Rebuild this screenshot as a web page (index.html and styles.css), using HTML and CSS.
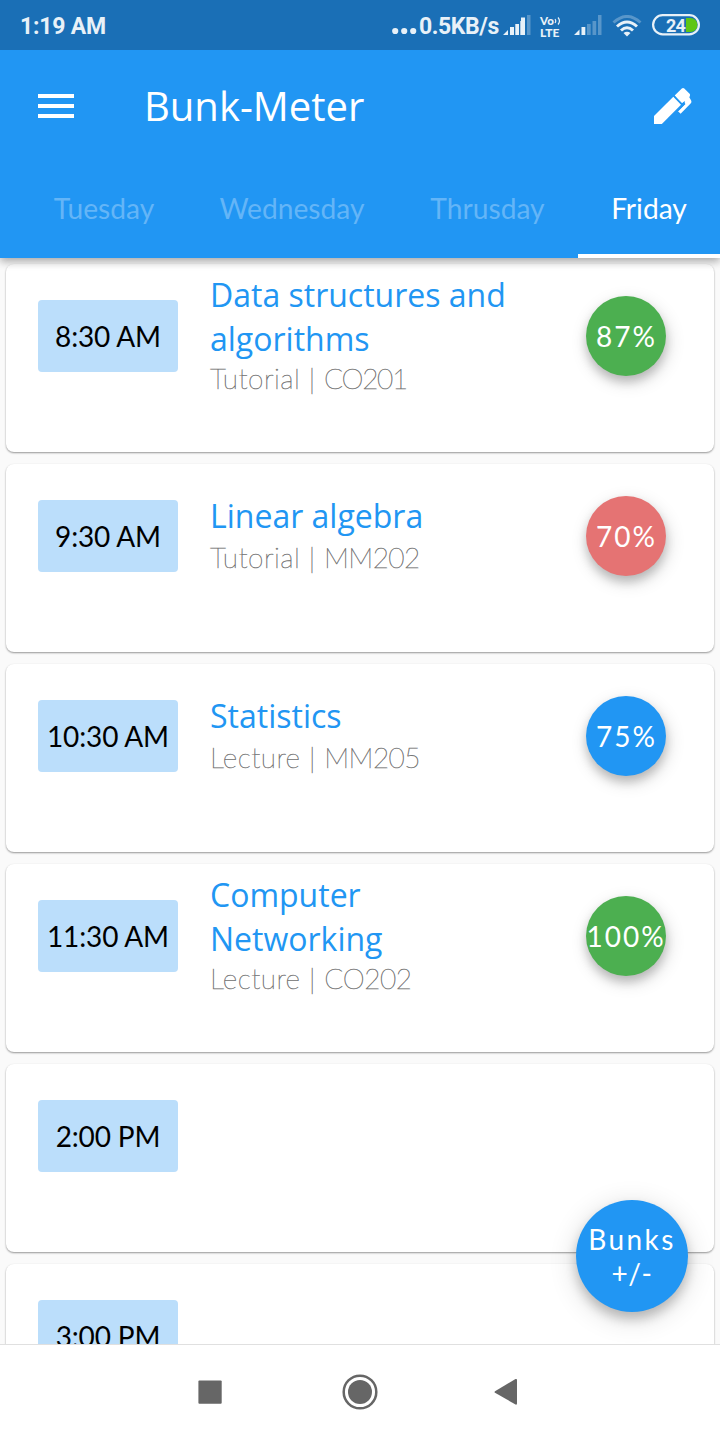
FILE: index.html
```html
<!DOCTYPE html>
<html lang="en">
<head>
<meta charset="utf-8">
<title>Bunk-Meter</title>
<link rel="stylesheet" href="styles.css">
</head>
<body>
<div class="app">
  <header class="header">
    <div class="status">
      <span class="clock">1:19 AM</span>
      <div class="status-right">
        <svg class="dots" width="25" height="8" viewBox="0 0 25 8" fill="#e8f1f8"><circle cx="3.2" cy="4" r="3.1"/><circle cx="12.2" cy="4" r="3.1"/><circle cx="21.2" cy="4" r="3.1"/></svg>
        <span class="speed">0.5KB/s</span>
        <svg class="signal" width="28" height="21" viewBox="0 0 28 21" fill="#e8f1f8"><path d="M0 20 5 15v5zM7 12h4v8H7zM12.300 9h3.700v11h-3.700zM17.300 6H21v14h-3.700zM18 2.500h4v17.500h-4z"/><path opacity=".3" d="M24 0h3.500v20H24z"/></svg>
        <div class="volte"><span class="vo">Vo<svg width="7" height="8" viewBox="0 0 7 8" fill="none" stroke="#e8f1f8" stroke-width="1.200"><path d="M1 2Q2.500 4 1 6M4 .5Q7 4 4 7.500"/></svg></span><span class="lte">LTE</span></div>
        <svg class="signal second" width="28" height="21" viewBox="0 0 28 21" fill="#e8f1f8"><path d="M0 20 5.500 14.500V20zM7.500 12h3.800v8H7.500z"/><path opacity=".3" d="M13 9h3.700v11H13zM18.500 6h3.700v14h-3.700zM24 0h3.500v20H24z"/></svg>
        <svg class="wifi" width="30" height="22" viewBox="0 0 30 22" fill="none" stroke="#e8f1f8" stroke-width="3"><path opacity=".3" d="M1.500 7.500Q15-4.500 28.500 7.500"/><path d="M5 11.500Q15 2.500 25 11.500M9 15.500Q15 10 21 15.500"/><path fill="#e8f1f8" stroke="none" d="M11.500 18Q15 15.500 18.500 18L15 21.500z"/></svg>
        <svg class="battery" width="48" height="22" viewBox="0 0 48 22"><path fill="#5ec616" d="M34 4h4.500a7 7 0 0 1 0 14H34z"/><rect x="1.100" y="1.100" width="45.800" height="19.300" rx="9.600" fill="none" stroke="#e8f1f8" stroke-width="2.200"/><text x="14" y="17.500" class="battery-text">24</text></svg>
      </div>
    </div>
    <div class="toolbar">
      <svg width="36" height="24" viewBox="0 0 36 24" fill="#fff"><path d="M0 0h36v4H0zM0 10h36v4H0zM0 20h36v4H0z"/></svg>
      <h1 class="title">Bunk-Meter</h1>
      <svg width="38" height="36" viewBox="0 0 38 36" fill="#fff"><path d="M0 28 19.300 8.800 27 16.800 7.800 36H0z"/><path d="M20.700 7.500 27.800.4Q29-.4 30.300.4L35.600 5.700Q36.700 7 35.300 9.200L37 12.300Q38 14 36.600 15.400L26.600 25.800 24 23.200 31.200 16 30.200 14 27.900 16z"/><path d="M20 8 28 16 30.800 13.600M24 22.600 31 15.600" fill="none" stroke="#2196f3" stroke-width="1.200"/></svg>
    </div>
    <nav class="tabs">
      <span class="tab tue">Tuesday</span><span class="tab wed">Wednesday</span><span class="tab thu">Thrusday</span><span class="tab active">Friday</span>
    </nav>
  </header>
  <main class="list">
    <section class="card"><div class="row"><time class="time">8:30 AM</time><div class="course double"><h2>Data structures and algorithms</h2><p>Tutorial | <span class="code-co1">CO201</span></p></div><div class="pct green">87%</div></div></section>
    <section class="card"><div class="row"><time class="time">9:30 AM</time><div class="course"><h2>Linear algebra</h2><p>Tutorial | <span class="code-mm">MM202</span></p></div><div class="pct red">70%</div></div></section>
    <section class="card"><div class="row"><time class="time">10:30 AM</time><div class="course"><h2>Statistics</h2><p>Lecture | <span class="code-mm">MM205</span></p></div><div class="pct blue">75%</div></div></section>
    <section class="card"><div class="row"><time class="time">11:30 AM</time><div class="course double"><h2>Computer<br>Networking</h2><p>Lecture | <span class="code-co2">CO202</span></p></div><div class="pct green full">100%</div></div></section>
    <section class="card"><div class="row"><time class="time">2:00 PM</time></div></section>
    <section class="card"><div class="row"><time class="time">3:00 PM</time></div></section>
  </main>
  <button class="fab">Bunks<br><span class="fab-signs">+/-</span></button>
  <footer class="navbar">
    <svg width="24" height="24" viewBox="0 0 24 24"><rect x=".4" y=".4" width="23.300" height="23.300" rx="1" fill="#666"/></svg>
    <svg class="home" width="36" height="36" viewBox="0 0 36 36"><circle cx="18" cy="18" r="16.300" fill="none" stroke="#666" stroke-width="2.500"/><circle cx="18" cy="18" r="12" fill="#666"/></svg>
    <svg width="24" height="28" viewBox="0 0 24 28"><path d="M1 13.200 21.500 1Q23 .5 23 2V25.500Q23 27 21.500 26.500L1 14.800Q0 14 1 13.200z" fill="#666"/></svg>
  </footer>
</div>
</body>
</html>
```
FILE: styles.css
```css
* { box-sizing: border-box; }
body { margin: 0; }
.app { position: relative; display: flex; flex-direction: column; width: 720px; height: 1440px; overflow: hidden; background: #fafafa; font-family: Lato, sans-serif; }
h1, h2, p { margin: 0; font-weight: 400; }
svg { display: block; flex: none; }
.header { position: relative; z-index: 1; flex: none; height: 258px; background: #2196f3; box-shadow: 0 4px 8px rgba(0,0,0,.22), 0 1px 10px rgba(0,0,0,.16); }
.status { height: 50px; padding: 0 20px; display: flex; justify-content: space-between; align-items: center; background: #1a6fb6; color: #e8f1f8; font: 700 23px/50px Roboto, sans-serif; white-space: nowrap; }
.clock { padding-top: 3px; letter-spacing: -.2px; }
.status-right { display: flex; align-items: center; }
.dots { margin: 12px 2px 0 0; }
.speed { width: 84px; padding-top: 3px; letter-spacing: -.4px; }
.volte { width: 23px; height: 25px; margin: 4px 0 0 9px; font: 900 12px/12px Lato, sans-serif; }
.vo, .lte { display: flex; align-items: center; height: 12px; }
.vo { font-size: 11.500px; }
.lte { font-size: 12px; }
.second { margin-left: 11px; }
.wifi { margin: 1px 0 0 10px; }
.battery { margin: 0 0 1px 10px; }
.battery-text { fill: #e8f1f8; font: 700 18px Roboto, sans-serif; letter-spacing: -.9px; }
.toolbar { height: 112px; padding: 0 28px 0 38px; display: flex; align-items: center; color: #fff; }
.title { flex: 1; margin-left: 70px; font: 400 40px/54px "Open Sans", sans-serif; }
.tabs { height: 96px; display: flex; color: #64b5f7; font-size: 28.200px; line-height: 92px; white-space: nowrap; }
.tab { flex: none; text-align: center; }
.tue { width: 166px; margin-left: 21px; }
.wed { width: 210px; }
.thu { width: 181px; }
.active { width: 142px; color: #fff; border-bottom: 4px solid #fff; }
.list { flex: none; height: 1086px; padding: 6px; display: flex; flex-direction: column; gap: 12px; overflow: hidden; }
.card { flex: none; height: 188px; border-radius: 8px; background: #fff; box-shadow: 0 1px 2px rgba(0,0,0,.36), 0 1px 2px rgba(0,0,0,.06); }
.row { height: 144px; padding: 0 48px 0 32px; display: flex; align-items: center; }
.time { flex: none; width: 140px; height: 72px; border-radius: 4px; background: #bbdefb; color: #000; text-align: center; font-size: 28px; line-height: 73px; letter-spacing: -.15px; }
.course { width: 312px; margin: 0 64px 0 32px; white-space: nowrap; }
.course h2 { color: #2196f3; font: 400 32px/44px "Open Sans", sans-serif; white-space: normal; }
.course p { height: 40px; color: #777; font-size: 28px; line-height: 38px; font-weight: 100; letter-spacing: .45px; -webkit-text-stroke: .5px #777; }
.double p { height: 38px; line-height: 34px; }
.course .code-co1 { letter-spacing: -1.300px; }
.course .code-co2 { letter-spacing: -.4px; }
.course .code-mm { letter-spacing: -.6px; }
.pct { flex: none; width: 80px; height: 80px; padding-left: 1px; display: flex; justify-content: center; align-items: center; border-radius: 50%; color: #fff; font-size: 28px; letter-spacing: 2px; box-shadow: 0 6px 10px rgba(0,0,0,.18), 2px 6px 18px rgba(0,0,0,.16); }
.full { padding-left: 0; }
.green { background: #4caf50; }
.red { background: #e57373; }
.blue { background: #2196f3; }
.fab { position: absolute; z-index: 2; left: 576px; top: 1200px; width: 112px; height: 112px; padding: 0; border: 0; border-radius: 50%; background: #2196f3; color: #fff; font: 400 28px/34px Lato, sans-serif; letter-spacing: 2.400px; box-shadow: 0 7px 11px rgba(0,0,0,.2), 0 6px 28px rgba(0,0,0,.16); }
.fab-signs { letter-spacing: .6px; }
.navbar { position: relative; z-index: 1; flex: none; height: 96px; padding: 0 202px 2px 198px; display: flex; align-items: center; justify-content: space-between; background: #fff; border-top: 1px solid #e0e0e0; }
.home { margin-left: 3px; }
```
